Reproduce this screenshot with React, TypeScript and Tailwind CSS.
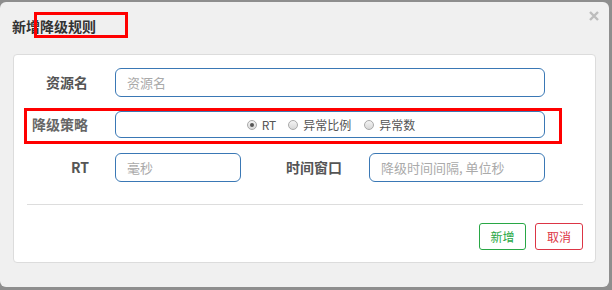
import React from 'react';

const font = { fontFamily: '"Noto Sans CJK SC", "Liberation Sans", sans-serif' };

function Radio({ checked, label }: { checked?: boolean; label: string }) {
  return (
    <label className="flex items-center gap-[5px] text-[12px] text-[#555]">
      <span className="flex h-[10px] w-[10px] items-center justify-center rounded-full border border-[#a9a9a9] bg-gradient-to-b from-[#f4f4f4] to-[#d8d8d8]">
        {checked && <span className="h-[4px] w-[4px] rounded-full bg-[#555]"></span>}
      </span>
      {label}
    </label>
  );
}

export default function App() {
  return (
    <div className="h-[290px] w-[612px] bg-[#8e8e8e] pt-[2px]" style={font}>
      <div className="relative h-[285px] w-[609px] rounded-[6px] bg-[#f0f0f0]">
        {/* Header */}
        <div className="flex h-[52px] items-start px-[12px] pt-[14px]">
          <h4 className="text-[14px] font-bold leading-[20px] text-[#333]">新增降级规则</h4>
        </div>
        <svg className="absolute right-[10px] top-[9px]" width="10" height="10" viewBox="0 0 10 10">
          <path d="M1 1L9 9M9 1L1 9" stroke="#bdbdbd" strokeWidth="2.4" />
        </svg>
        <div className="absolute left-[34px] top-[10px] h-[26px] w-[94px] border-[3px] border-[#ff0000]"></div>

        {/* Form card */}
        <div className="relative mx-[13px] h-[209px] rounded-[4px] border border-[#dcdcdc] bg-white pt-[13px]">
          <div className="flex h-[29px] items-center">
            <div className="w-[74px] text-right text-[14px] font-bold text-[#555]">资源名</div>
            <input
              readOnly
              placeholder="资源名"
              className="ml-[27px] h-[29px] w-[430px] rounded-[6px] border border-[#3a78b5] px-[11px] text-[13px] outline-none placeholder:text-[#aaa]"
            />
          </div>

          <div className="mt-[14px] flex h-[27px] items-center">
            <div className="w-[74px] text-right text-[14px] font-bold text-[#666]">降级策略</div>
            <div className="ml-[27px] flex h-[27px] w-[430px] items-center justify-center rounded-[6px] border border-[#3a78b5] pl-[2px]">
              <Radio checked label="RT" />
              <span className="w-[12px]"></span>
              <Radio label="异常比例" />
              <span className="w-[13px]"></span>
              <Radio label="异常数" />
            </div>
          </div>

          <div className="mt-[15px] flex h-[29px] items-center">
            <div className="w-[75px] text-right text-[14px] font-bold text-[#555]">RT</div>
            <input
              readOnly
              placeholder="毫秒"
              className="ml-[26px] h-[29px] w-[126px] rounded-[6px] border border-[#3a78b5] px-[11px] text-[13px] outline-none placeholder:text-[#aaa]"
            />
            <div className="w-[101px] text-right text-[14px] font-bold text-[#555]">时间窗口</div>
            <input
              readOnly
              placeholder="降级时间间隔, 单位秒"
              className="ml-[27px] h-[29px] w-[176px] rounded-[6px] border border-[#3a78b5] px-[11px] text-[13px] outline-none placeholder:text-[#aaa]"
            />
          </div>

          <div className="ml-[13px] mr-[12px] mt-[22px] h-px bg-[#dddddd]"></div>

          <div className="mr-[12px] mt-[18px] flex justify-end gap-[9px]">
            <button className="h-[27px] w-[47px] rounded-[3px] border border-[#28a745] text-[12px] text-[#28a745]">新增</button>
            <button className="h-[27px] w-[48px] rounded-[3px] border border-[#dc3545] text-[12px] text-[#dc3545]">取消</button>
          </div>

          <div className="absolute left-[10px] top-[53px] h-[36px] w-[538px] border-[3px] border-[#ff0000]"></div>
        </div>
      </div>
    </div>
  );
}
